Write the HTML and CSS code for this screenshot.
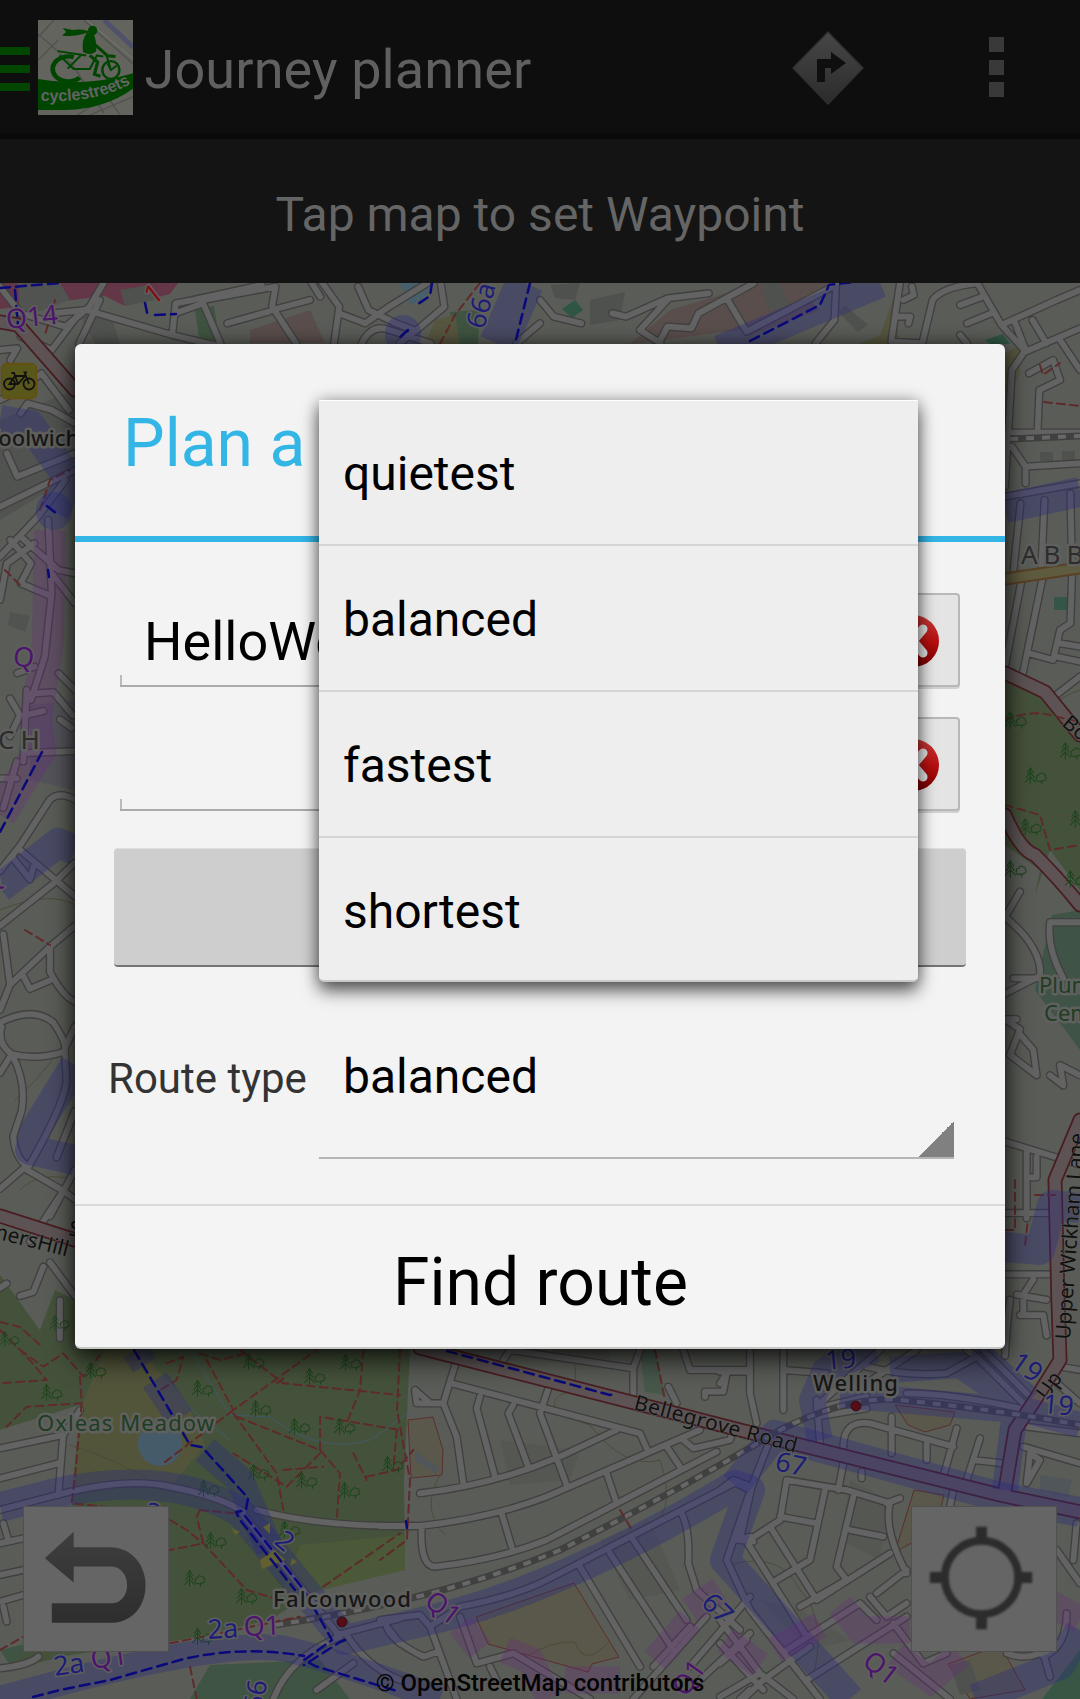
FILE: index.html
```html
<!DOCTYPE html>
<html lang="en">
<head>
<meta charset="utf-8">
<title>Journey planner</title>
<link rel="stylesheet" href="styles.css">
</head>
<body>
<div class="screen">
  <header class="action-bar">
    <div class="drawer-icon"><i></i><i></i><i></i></div>
    <svg class="logo" viewBox="105 58 266 287" preserveAspectRatio="none">
      <rect x="105" y="58" width="266" height="287" fill="#64645f"/>
      <g fill="none" stroke="#51514e" stroke-width="4">
        <path d="M105 100L200 190L290 340M150 58L105 110M105 180L160 120M215 345L371 240M250 345L371 290M235 60L371 190M300 290L335 345"/>
      </g>
      <path d="M290 58L371 140" stroke="#50526c" stroke-width="14"/>
      <path d="M240 58L371 175" stroke="#74746f" stroke-width="3"/>
      <path d="M105 236Q240 262 371 219V266Q290 328 185 330H105Z" fill="#004600"/>
      <g fill="none" stroke="#004600">
        <path d="M222 232A44 38 0 1 1 205 170" stroke-width="13"/>
        <ellipse cx="309" cy="209" rx="24" ry="27" stroke-width="7"/>
        <path d="M160 152L240 165M165 165L205 206H250L270 165L288 168M188 205L225 165M309 209L297 165M300 190L309 209L325 196" stroke-width="6"/>
        <path d="M250 165L272 185L263 222L280 228M262 130L300 166L322 168" stroke-width="9"/>
      </g>
      <ellipse cx="258" cy="90" rx="13" ry="15" fill="#004600"/>
      <path d="M243 96Q226 115 231 155Q250 168 268 153Q270 120 260 98ZM246 91Q222 84 201 88L174 82L184 94L172 105Q202 111 246 96Z" fill="#004600"/>
      <path id="logo-curve" d="M112 302Q265 312 372 247" fill="none"/>
      <text class="logo-text"><textPath href="#logo-curve" textLength="262" lengthAdjust="spacingAndGlyphs">cyclestreets</textPath></text>
    </svg>
    <h1>Journey planner</h1>
    <svg class="turn-icon" viewBox="0 0 74 76">
      <defs><linearGradient id="sign" x2="0" y2="1"><stop stop-color="#474747"/><stop offset="1" stop-color="#2b2b2b"/></linearGradient></defs>
      <path d="M37 2L72 38L37 74L2 38Z" fill="url(#sign)" stroke="#303030" stroke-width="1.5" stroke-linejoin="round"/>
      <path d="M26 52V29H40V22L55 33L40 44V38H34V52Z" fill="#0f0f0f"/>
    </svg>
    <div class="overflow-icon"><i></i><i></i><i></i></div>
  </header>
  <div class="hint">Tap map to set Waypoint</div>

  <main class="map">
    <svg class="map-canvas" viewBox="0 283 1080 1416">
      <defs>
        <symbol id="tree" viewBox="0 0 66 56" overflow="visible">
          <path d="M16 0V52M16 2L6 18M16 2L26 18M16 15L3 32M16 15L29 32M16 29L0 46M16 29L32 46M50 52V40M50 45L58 38M38 42Q30 40 35 32Q32 24 41 24Q44 14 53 20Q63 20 61 29Q68 36 58 40Q48 44 38 42Z"/>
        </symbol>
        <g id="minor">
          <!-- north-west -->
          <g transform="translate(0 280) scale(.3444 .3333)">
            <path d="M0 20L60 100L190 140L260 80L300 10M150 100L250 90L500 165L640 200M230 190L290 60M230 100L150 210L60 170M500 165L510 70L560 60L760 15M510 100L590 70L640 190M590 60L800 20L790 80L860 190M660 130L780 95M790 90L900 60M930 0L985 80L970 190M985 100L1060 130L1130 80L1240 10M1040 20L1070 90L1150 130L1200 150M1280 10L1290 80L1210 150L1160 190M1050 190Q1080 130 1130 150L1250 190M900 0L930 50M1500 190L1568 130M0 210L50 205L30 240M0 360L40 340L120 280L200 390M60 400L80 370L150 390L218 430M20 520L50 590L218 520M0 680L218 570M0 830L110 710L190 600M60 770L170 870L218 880M60 910L140 945L60 910L90 850L30 780M0 960L20 850L100 790M140 720L150 940L130 1130L90 1260M150 880L218 970M170 1180L218 1230M50 1180L100 1160"/>
          </g>
          <!-- north-east -->
          <g transform="translate(540 280) scale(.3444 .3333)">
            <path d="M0 60L40 110L120 130M210 100L250 110L370 55L490 40M370 60L290 150L350 190M350 180L370 140L440 145L460 100L620 10M545 60L600 155L850 20M860 10L855 120L800 190M1045 10L1020 185L1110 190M1080 20L1085 45L1055 60M1040 110L1075 110L1070 130M1110 190L1140 60Q1170 20 1270 10L1340 135L1410 215L1568 145M1340 135L1500 60L1568 30M1220 75L1285 50M1240 130L1310 100M1220 165L1240 190M1380 130L1410 210L1370 270L1350 620M1420 280L1490 240L1510 300L1450 330L1445 450M1430 120L1470 190M1510 180L1568 270M1368 458H1568M1370 500L1410 560L1568 550M1410 560V610M1350 650L1568 610M1395 670L1375 870M1465 660L1455 880M1540 640L1545 870M1350 1160L1400 890M1460 890L1400 1190M1545 880L1540 1030L1510 1050L1490 1140L1420 1120M1510 1090L1568 1100M1500 1130L1568 1145M1568 1190L1480 1260"/>
          </g>
          <!-- west strip -->
          <g transform="translate(0 690) scale(.3333 .4209)">
            <path d="M80 0L70 170M80 10L160 5L218 60M180 70L215 90M75 60L130 50M30 20L60 60L30 110M70 150L225 145M50 170L10 280M0 210H50M225 260Q180 240 150 260L60 370L0 430M60 380L225 490M40 400L90 450L100 420M0 560L160 460L225 410M30 700L150 610L225 560M10 580L30 700L0 760M150 610V670Q190 730 225 740M70 680L90 710L150 690M0 790Q100 750 160 790Q210 850 190 860Q110 880 35 865Q-10 840 5 800M0 910L35 865Q80 930 65 1000L40 1060Q45 1110 80 1130L0 1185M195 860L200 930Q190 990 80 1140L190 1190L225 1210M225 800L195 850M225 1000L170 1110M190 1190L90 1310M225 1140L150 1250M60 1440L100 1430L130 1370M150 1360L225 1440M180 1450V1540M0 1420L20 1410"/>
          </g>
          <!-- east strip -->
          <g transform="translate(900 560) scale(.3333 .5102)">
            <path d="M315 700L360 650M315 700Q430 760 420 820H340M420 815L315 850M450 710Q440 760 490 820M450 710H540M315 900L360 920L330 970L410 1010L400 960L360 930M320 900L350 900M450 1010L490 1030L480 990L540 1010M315 1140L540 1185M380 1160V1290M410 1170V1210L380 1210M320 1280H450M315 1400H470M350 1440L440 1450M315 1560Q320 1500 330 1450M360 1480H430L440 1520M400 1410L370 1440V1480"/>
          </g>
          <!-- south-west -->
          <g transform="translate(0 1330) scale(.33333)">
            <path d="M0 355L190 315L240 240M190 310L175 495M0 445L175 400M0 540L170 495Q380 440 510 470Q660 500 730 545M0 640L70 625M10 580L25 630M0 735L70 720M0 815L70 795M10 830L20 875M0 1015Q90 1005 115 980M730 555L1020 920Q870 980 820 1107M1010 915L1200 865M1040 915Q1100 1010 1200 1050M950 1080L1060 1000M770 540Q950 590 1240 588M1160 890L1200 940M1390 860"/>
          </g>
          <!-- south -->
          <g transform="translate(380 1330) scale(.33333)">
            <path d="M0 588H120Q330 565 500 500L960 300M120 490Q340 465 540 380L710 300M215 160L780 310L800 355M230 90L190 220L230 320L250 460M190 220H110L105 180L145 215M300 200L290 235L345 440M400 225L385 250L445 410M510 160L480 250L560 465M125 590Q120 710 165 710Q350 690 500 630L1010 365M365 550L395 650M680 430L710 520M860 350L900 410M910 330L940 355L1050 330L1060 300M370 90L390 60L760 115L780 60M760 115V190M910 60L930 120H1110M1040 130L1030 185H975V200M865 170L890 220M0 870L120 855L150 890L240 830Q400 800 500 750L1070 455L1110 470M20 890Q30 930 130 980L175 965M150 890L230 1107M240 860L290 1000L400 970L630 1107M905 550Q930 600 925 700L950 780L1080 900M600 710L780 1010M690 670L880 960M760 630L920 870M980 860L760 1107M1110 910L960 1050M1080 1107L1110 1080M820 1010L930 890M330 1010L350 1050M1110 800L930 1010M1110 620L1070 630M1070 460L1110 480"/>
          </g>
          <!-- south-east -->
          <g transform="translate(720 1330) scale(.33333)">
            <path d="M90 60V190L110 280M0 125H90M190 60V240M190 120L320 130M0 160L20 130M290 210L300 340M290 235L440 200M370 350Q370 270 450 280L700 350M515 260V370M710 295L670 440M620 340V390M780 325L740 450M760 390L850 400M290 260L440 235M200 450L380 480L510 520Q490 600 560 730M200 450L180 570L80 635L260 920M315 480L270 690L170 750M400 500L350 710L380 750M180 560L290 580M390 600L490 620M150 590L290 810L510 670M500 520L540 505M370 400L355 480M425 425V445M560 720L470 790M380 750L240 830M450 800L500 860L560 820M200 960L420 820L470 870M260 1050L560 860M270 950L130 1050L70 1107M0 1100L120 1030L220 1107M0 870L120 1030M90 840L300 1107M0 1000L80 930M520 880L610 1000L680 970M520 970L690 1107M970 970L990 1040M860 970Q910 990 960 970M1010 660L1080 760M1040 850Q1040 950 970 980M1070 580L1060 690M910 350L1080 400M920 460L960 390L930 370Z M560 190Q700 190 920 240M480 60L400 130L300 220M440 110Q560 140 680 130L770 80L930 240M590 60L440 160M790 60L930 200M920 290L1080 310M1020 110L1080 120M1000 150L1080 220M700 480L690 530M0 480L40 450L95 470L20 690L90 840M150 330L95 470L60 630L100 635M770 80L740 60M130 1080L0 940"/>
          </g>
        </g>
        <g id="major">
          <path d="M0 322L18 325L75 390"/>
          <path d="M1005 673L1045 692L1080 735M1005 815Q1020 850 1035 855Q1060 880 1080 905"/>
          <path d="M1080 1120L1055 1180L1058 1300L1060 1360L1035 1400L1015 1430L1005 1490"/>
          <path d="M420 1348L740 1430L1000 1495L1080 1512"/>
          <path d="M0 1216L75 1240"/>
        </g>
        <linearGradient id="back" x2="0" y2="1"><stop stop-color="#3e3e3e"/><stop offset="1" stop-color="#2e2e2e"/></linearGradient>
      </defs>

      <rect y="283" width="1080" height="1416" fill="#5a5d57"/>
      <!-- land use -->
      <path d="M0 283H178L170 294L125 306L105 296L0 309Z" fill="#633648"/>
      <path d="M195 310L214 306L220 344H200ZM450 312L480 310L478 344H455Z" fill="#3f5440"/>
      <path d="M250 330L310 310L325 343H250ZM630 344L670 310L760 283H830L740 330ZM720 300L790 283L820 310L750 335Z" fill="#5a4e4c"/>
      <path d="M400 283H432L425 298L410 305Z" fill="#475e6b"/>
      <path d="M435 320L455 315L460 344H425ZM893 300L880 335L860 344H900ZM1005 354L1020 344V374L1005 400Z" fill="#56563f"/>
      <path d="M562 309L575 300L583 310L572 318ZM985 340L1003 334L1010 344H990Z" fill="#2f5544"/>
      <path d="M0 420L75 390V460L50 490L0 520ZM10 612L30 616L25 632L8 625ZM18 283H60L70 300L20 318ZM80 315L110 312L120 344H95Z" fill="#515350"/>
      <path d="M30 705L75 700V790L30 780Z" fill="#54535a"/>
      <rect x="1054" y="597" width="13" height="13" fill="#345547"/>
      <path d="M1005 675L1040 695L1080 740V890L1050 850L1035 895L1040 870L1005 845Z" fill="#45523b"/>
      <path d="M1052 915L1080 910V1050L1035 990Z" fill="#3f5447"/>
      <path d="M0 1275L40 1330L55 1290L75 1300V1349H410L404 1480L405 1570L325 1585L270 1620L180 1640L70 1655L0 1672V1630H56V1507H72L80 1405L0 1430Z" fill="#45523b"/>
      <path d="M82 1405L105 1349L140 1349L185 1400L205 1445L172 1485L70 1492Z" fill="#525539"/>
      <path d="M0 1430L80 1405L72 1490L56 1507V1635L0 1670Z" fill="#5a5d57"/>
      <path d="M300 1545L405 1535V1570L330 1588L280 1600Z" fill="#4b5938"/>
      <path d="M0 1650L50 1638L10 1665ZM210 1665L320 1660L350 1699H190Z" fill="#405443"/>
      <circle cx="160" cy="1444" r="22" fill="#455b69"/>
      <path d="M408 1420L433 1417L443 1450L442 1475L411 1478ZM476 1617L574 1583L619 1657L592 1664L588 1672L488 1644ZM895 1405L955 1412L950 1425L925 1432L908 1425ZM914 1490L944 1495L935 1530L895 1552ZM948 1664L1000 1645L1025 1690L970 1699Z" fill="#5a584a" stroke="#5c2e2e"/>
      <path d="M416 1452L440 1468L436 1474L414 1460ZM1040 1475L1072 1480L1068 1497L1040 1490Z" fill="#505659"/>
      <path d="M640 1350H655L665 1395L645 1392Z" fill="#47584b"/>
      <path d="M1042 1699L1080 1650V1699Z" fill="#375744"/>
      <g fill="#4f514e">
        <path d="M550 285L580 283L575 300L555 298ZM590 300L625 292L620 320L590 325ZM760 283L780 283L790 305L770 312ZM845 305L868 325L858 332L838 312ZM120 290L150 285L155 300L125 306ZM1040 452H1053V461H1040ZM1062 451H1075V460H1062ZM950 1665L970 1660L980 1690L960 1695Z"/>
        <path d="M550 1349H610V1365L560 1360ZM500 1440L580 1450L570 1480L510 1485ZM600 1540L650 1520L680 1590L630 1600ZM760 1600L800 1610L850 1640L810 1650ZM850 1480L890 1500L880 1560L840 1540Z" opacity=".45"/>
      </g>
      <!-- contours and streams -->
      <g fill="none" stroke="#4b4c38">
        <path d="M570 1349Q585 1390 560 1395Q540 1410 590 1425Q625 1470 660 1460Q680 1520 640 1530M440 1475Q420 1510 445 1535M730 1565Q780 1550 800 1590Q830 1620 810 1690M15 1100Q60 1060 75 1020M0 910Q50 890 75 905M20 1190Q40 1170 75 1180M1010 740Q1050 700 1080 690M1040 820Q1060 810 1080 820M70 1445Q120 1460 165 1490M250 1430Q290 1440 300 1480M522 1660Q550 1640 575 1642Q585 1670 610 1640"/>
        <path d="M190 1350L230 1415L270 1417Q320 1455 370 1440Q400 1420 410 1410M180 1400L230 1440" stroke="#41596a"/>
      </g>

      <!-- roads -->
      <g class="roads">
        <use href="#minor" class="minor-case"/>
        <use href="#minor" class="minor-fill"/>
        <use href="#major" class="major-case"/>
        <use href="#major" class="major-fill"/>
        <path d="M1005 579L1080 568" stroke="#594023" stroke-width="13"/>
        <path d="M1005 579L1080 568" stroke="#5f5b40" stroke-width="9"/>
      </g>

      <!-- railway -->
      <g fill="none">
        <path d="M275 1625Q440 1600 560 1550Q680 1490 780 1430Q850 1395 900 1400Q1000 1410 1080 1425M1010 439L1080 436" stroke="#404040" stroke-width="7"/>
        <path d="M275 1625Q440 1600 560 1550Q680 1490 780 1430Q850 1395 900 1400Q1000 1410 1080 1425M1010 439L1080 436" stroke="#676767" stroke-width="4" stroke-dasharray="8 8"/>
      </g>

      <!-- woodland footpaths -->
      <g class="footpath">
        <g transform="translate(0 1330) scale(.33333)">
          <path d="M0 0L80 80L140 150L0 160M60 60L130 110L190 70L250 140L300 75M240 140L245 220L80 230L20 290M245 220L225 440L215 520L320 530M600 70L660 90L740 70M620 90L700 240L950 60M720 60L850 160L1200 195M850 145L830 160M1090 60L1080 180L1040 280M700 240L490 400M700 250L830 430L850 540M710 260L960 360L1020 430L1010 570M960 360V260L1200 300M960 370L860 470L700 370M500 100L550 80L530 150L480 180M850 420L970 410M1100 440L1190 420L1240 360M1060 370L1100 450M1190 300L1180 420M510 570L560 600L610 640L740 780L840 810M600 540L590 560L610 640L510 660M510 940L900 860M600 540L700 550M970 770L1200 610M0 960L70 920M570 1010L590 1107"/>
        </g>
        <path d="M400 1350L397 1410L410 1480L407 1540L380 1560M655 1350L665 1400M620 1510L632 1530M5 570L20 585M55 300L45 335M40 510L50 480L70 470M25 930L50 945M0 1322L20 1327L40 1345M1005 805L1040 815L1050 850L1080 845M1005 720Q1030 710 1050 715L1080 722M1015 1180V1230H1005M1035 1195H1055M1025 1245L1028 1220M1040 365L1043 375L1060 363M1044 402L1080 406M440 344L455 315L480 283"/>
      </g>
      <g fill="none" stroke="#1e451e" stroke-width="3.200">
        <use href="#tree" x="0" y="1331" width="20" height="17"/><use href="#tree" x="85" y="1362" width="22" height="18"/><use href="#tree" x="41" y="1384" width="22" height="18"/><use href="#tree" x="192" y="1380" width="22" height="18"/><use href="#tree" x="243" y="1353" width="22" height="18"/><use href="#tree" x="304" y="1368" width="22" height="18"/><use href="#tree" x="340" y="1354" width="22" height="18"/><use href="#tree" x="250" y="1400" width="22" height="18"/><use href="#tree" x="289" y="1418" width="22" height="18"/><use href="#tree" x="334" y="1418" width="22" height="18"/><use href="#tree" x="248" y="1464" width="22" height="18"/><use href="#tree" x="296" y="1472" width="22" height="18"/><use href="#tree" x="339" y="1482" width="22" height="18"/><use href="#tree" x="382" y="1456" width="22" height="18"/><use href="#tree" x="198" y="1480" width="22" height="18"/><use href="#tree" x="205" y="1532" width="22" height="18"/><use href="#tree" x="184" y="1570" width="22" height="18"/><use href="#tree" x="236" y="1588" width="22" height="18"/><use href="#tree" x="192" y="1628" width="22" height="18"/><use href="#tree" x="279" y="1521" width="22" height="18"/><use href="#tree" x="50" y="1315" width="20" height="17"/><use href="#tree" x="1005" y="711" width="22" height="19"/><use href="#tree" x="1060" y="742" width="22" height="19"/><use href="#tree" x="1025" y="767" width="22" height="19"/><use href="#tree" x="1020" y="818" width="22" height="19"/><use href="#tree" x="1070" y="810" width="22" height="19"/><use href="#tree" x="1005" y="860" width="22" height="19"/><use href="#tree" x="1065" y="870" width="22" height="19"/>
      </g>

      <!-- cycle network -->
      <g fill="none" stroke="#282880" stroke-opacity=".34" stroke-width="30" stroke-linejoin="round">
        <path d="M525 283L498 344" stroke-width="38"/>
        <path d="M720 350L880 283M1005 508L1080 492M0 420L30 425L70 480L54 512M0 888L58 843L75 850M75 1065L35 1130L30 1150L75 1160"/>
        <path d="M403 333V335M54 510V512" stroke-width="36" stroke-linecap="round"/>
        <path d="M0 1507L60 1492Q170 1470 240 1512L345 1640L430 1620"/>
        <path d="M135 1350L145 1365M155 1380L180 1418M205 1450L240 1480L270 1550" stroke-width="28"/>
        <path d="M0 1699Q230 1635 290 1650Q350 1665 440 1699" stroke-width="26"/>
        <path d="M430 1620Q560 1590 735 1485L750 1490L725 1560L850 1699"/>
        <path d="M735 1485L775 1435L1000 1497L1080 1512"/>
        <path d="M820 1440L812 1400L825 1370L875 1350M840 1395L1015 1410L1005 1490M890 1370L960 1365L1025 1410M1025 1410L1080 1425M975 1350L1030 1400" stroke-width="26"/>
        <path d="M1005 1247L1040 1250L1052 1205L1080 1208M975 1699L1060 1665L1080 1630"/>
      </g>
      <g fill="none" stroke="#682881" stroke-opacity=".28" stroke-width="32">
        <path d="M50 530L48 640L36 720L40 750L0 815"/>
        <path d="M460 1625L480 1650M505 1650L530 1660L550 1699M565 1680H620M655 1660L690 1620M690 1610L720 1590M725 1640L760 1665M775 1650L820 1625M840 1605L860 1630L910 1630M895 1655L930 1680L960 1655M1045 1600L1080 1620" stroke-width="27"/>
      </g>
      <g fill="#62602e"><path d="M260 1560L275 1550L285 1560L262 1569ZM263 1527L270 1523L270 1534ZM292 1558L297 1562L290 1566ZM232 1528L240 1532L235 1535Z"/></g>
      <g class="cycle">
        <path d="M134 1350L190 1445L202 1447L248 1498L246 1510L236 1512L240 1520L295 1590"/>
        <path d="M245 1516L304 1590L332 1640L304 1660L315 1666L400 1692"/>
        <path d="M33 1697L60 1690L110 1680L180 1660Q240 1645 304 1656"/>
        <path d="M447 1351L610 1395L615 1394M345 1640L340 1642L304 1665M406 1521L407 1528"/>
        <path d="M432 283L430 296L418 304M408 330L397 340M530 283L515 344M750 341L820 305L829 285L870 280M145 303L148 317M155 315L176 314M0 288L60 283M47 506L57 514M48 570L49 577M42 752L30 775L0 832M15 290L18 325"/>
      </g>

      <!-- street furniture and stations -->
      <g>
        <rect x="1.5" y="363.500" width="35" height="35" rx="5" fill="#5a571b" stroke="#664e0c" stroke-width="1.500"/>
        <g fill="none" stroke="#111" stroke-width="1.800"><circle cx="9.500" cy="384" r="5.500"/><circle cx="29" cy="384" r="5.500"/><path d="M9.500 384L15 376H25L18 384ZM18 384L14 373H11.500M29 384L24.500 372.500H27"/></g>
        <circle cx="342" cy="1622" r="5" fill="#560d15" stroke="#321014"/>
        <circle cx="856" cy="1406" r="5" fill="#560d15" stroke="#321014"/>
      </g>

      <g class="label">
        <text x="-22" y="446" class="place">Woolwich</text>
        <text x="1021" y="564" class="suburb">ABBEY</text>
        <text x="-2" y="749" class="suburb">CH</text>
        <text x="37" y="1431" class="green" textLength="177">Oxleas Meadow</text>
        <text x="1039" y="993" class="green">Plumstead</text>
        <text x="1044" y="1021" class="green">Cemetery</text>
        <text x="273" y="1607" class="place" textLength="138">Falconwood</text>
        <text x="813" y="1391" class="place" textLength="85">Welling</text>
        <text transform="translate(633 1409) rotate(15)" class="street" textLength="168">Bellegrove Road</text>
        <text transform="translate(-43 1229) rotate(14)" class="street">PlumersHill</text>
        <text transform="translate(68 1235) rotate(10)" class="street">Sh</text>
        <text transform="translate(1070 1340) rotate(-86)" class="street" textLength="207">Upper Wickham Lane</text>
        <text transform="translate(1061 725) rotate(40)" class="street">Bostall</text>
        <text transform="translate(1047 1401) rotate(-55)" class="street">Up</text>
      </g>
      <g class="label route">
        <text transform="translate(7 329) rotate(-6)" class="violet">Q14</text>
        <text transform="translate(153 306) rotate(-38)" class="red">1</text>
        <text transform="translate(484 330) rotate(-75)">66a</text>
        <text transform="translate(12 665) rotate(8)" class="violet">Q</text>
        <text transform="translate(-12 895) rotate(-40)" class="violet">Q</text>
        <text transform="translate(826 1370) rotate(-5)">19</text>
        <text transform="translate(1009 1366) rotate(35)">19</text>
        <text transform="translate(1042 1413) rotate(5)">19</text>
        <text transform="translate(774 1470) rotate(12)">67</text>
        <text transform="translate(700 1604) rotate(45)">67</text>
        <text transform="translate(143 1520) rotate(15)">2</text>
        <text transform="translate(273 1543) rotate(40)">2</text>
        <text transform="translate(208 1639) rotate(-3)">2a</text>
        <text transform="translate(244 1636) rotate(-2)" class="violet">Q1</text>
        <text transform="translate(55 1676) rotate(-8)">2a</text>
        <text transform="translate(92 1669) rotate(-8)" class="violet">Q1</text>
        <text transform="translate(423 1604) rotate(38)" class="violet">Q1</text>
        <text transform="translate(861 1664) rotate(38)" class="violet">Q1</text>
        <text transform="translate(686 1698) rotate(-55)" class="violet">Q1</text>
        <text transform="translate(262 1712) rotate(-80)">66</text>
      </g>
    </svg>

    <div class="map-controls">
      <div class="map-button">
        <svg viewBox="0 0 145 145"><path d="M21 51.500L50 25V40.500H87C134 42 134 115 89 116.500H28V97H89C109 96 109 61 88 60H50V76Z" fill="url(#back)"/></svg>
      </div>
      <div class="attribution">© OpenStreetMap contributors</div>
      <div class="map-button">
        <svg class="locate" viewBox="0 0 145 145"><g fill="none" stroke="#2c2c2c"><circle cx="70" cy="71" r="37" stroke-width="8"/><path d="M70 20V34M70 109V123M18 71H31M108 71H121" stroke-width="11"/></g></svg>
      </div>
    </div>
  </main>

  <section class="dialog">
    <h2>Plan a</h2>
    <div class="form">
      <div class="row"><div class="field">HelloWo</div><button class="clear"><svg viewBox="0 0 52 52"><use href="#x-mark"/></svg></button></div>
      <div class="row"><div class="field"></div><button class="clear"><svg viewBox="0 0 52 52"><use href="#x-mark"/></svg></button></div>
      <div class="add-button"></div>
      <div class="route-type"><label>Route type</label><div class="spinner">balanced</div></div>
    </div>
    <div class="find">Find route</div>
    <ul class="options"><li>quietest</li><li>balanced</li><li>fastest</li><li>shortest</li></ul>
  </section>
  <svg class="defs" width="0" height="0">
    <defs>
      <linearGradient id="red" x2="0" y2="1"><stop stop-color="#c83c3c"/><stop offset=".5" stop-color="#b81010"/><stop offset="1" stop-color="#760000"/></linearGradient>
      <g id="x-mark"><circle cx="26" cy="26" r="26" fill="url(#red)"/><path d="M16 14L36 38M36 14L16 38" stroke="#e3e3e3" stroke-width="9" stroke-linecap="round"/></g>
    </defs>
  </svg>
</div>
</body>
</html>
```
FILE: styles.css
```css
* { box-sizing: border-box; }
body { margin: 0; background: #141414; font-family: Roboto, sans-serif; }
.screen { position: relative; display: flex; flex-direction: column; width: 1080px; height: 1699px; overflow: hidden; }
.defs { position: absolute; }

.action-bar { display: flex; align-items: center; height: 139px; flex: none; background: #0e0e0e; border-bottom: 6px solid #0a0a0a; }
.drawer-icon { display: flex; flex-direction: column; gap: 10px; width: 30px; padding-top: 5px; }
.drawer-icon i { height: 8px; background: #004600; }
.logo { width: 95px; height: 95px; margin: 1px 12px 0 7.5px; }
.logo-text { font: bold 50px "Liberation Sans", sans-serif; fill: #646464; }
.action-bar h1 { margin: 5px 0 0; flex: 1; font-size: 54px; font-weight: 400; letter-spacing: .12px; color: #606060; }
.turn-icon { width: 74px; height: 76px; margin-top: 2px; }
.overflow-icon { display: flex; flex-direction: column; gap: 7.5px; width: 15px; margin: 1px 76px 0 124px; }
.overflow-icon i { height: 15px; background: #393939; }
.hint { height: 144px; flex: none; padding-top: 4px; line-height: 144px; text-align: center; font-size: 48px; color: #656565; background: #141414; }

.map { position: relative; display: flex; flex: 1; }
.map-canvas { display: block; width: 1080px; height: 1416px; }
.roads, .footpath, .cycle { fill: none; stroke-linejoin: round; stroke-linecap: round; }
#minor path, #major path, .footpath path { vector-effect: non-scaling-stroke; }
.minor-case { stroke: #404040; stroke-width: 8.5px; }
.minor-fill { stroke: #636363; stroke-width: 5.800px; }
.major-case { stroke: #4a1d22; stroke-width: 15px; }
.major-fill { stroke: #5d5354; stroke-width: 11.500px; }
.footpath { stroke: #5f2a2a; stroke-width: 2px; stroke-dasharray: 8 5; }
.cycle { stroke: #09097b; stroke-width: 2.500px; stroke-dasharray: 10 6; }
.label { font: 22px "Noto Sans", sans-serif; fill: #171717; stroke: #5f605e; stroke-width: 5px; stroke-linejoin: round; paint-order: stroke; }
.place { font-weight: 500; }
.suburb { font-size: 26px; letter-spacing: 6px; fill: #2d2d2d; }
.green { fill: #203d24; }
.street { font-size: 21px; fill: #111; stroke-width: 1px; }
.route { font-size: 27px; fill: #1d1d77; stroke-width: 3px; }
.violet { fill: #4d146d; }
.red { fill: #850d14; }

.map-controls { position: absolute; left: 23px; right: 23px; bottom: 0; display: flex; justify-content: space-between; align-items: flex-end; }
.map-button { width: 146px; height: 146px; margin-bottom: 47px; background: #656565; border: 1px solid #505050; }
.map-button svg { display: block; width: 144px; height: 144px; }
.locate { filter: blur(1px); }
.attribution { font-size: 24px; line-height: 28px; margin-bottom: 2px; letter-spacing: -.05px; color: #050505; font-weight: 500; }

.dialog { position: absolute; left: 75px; top: 344px; width: 930px; height: 1005px; display: flex; flex-direction: column; background: #f3f3f3; border-radius: 6px; border-bottom: 2px solid #c5c7c5; box-shadow: 0 10px 28px rgba(0,0,0,.75), 0 0 14px rgba(0,0,0,.35); }
.dialog h2 { margin: 0; height: 198px; padding: 7px 48px 0; line-height: 185px; font-size: 66px; font-weight: 400; color: #33b5e5; border-bottom: 6px solid #33b5e5; }
.form { flex: 1; padding: 51px 34px 0; }
.row { display: flex; height: 94px; margin: 0 11px 30px; }
.field { position: relative; flex: 1; padding: 0 24px; font-size: 54px; line-height: 97px; color: #000; border-bottom: 2px solid #aaa; }
.field::before { content: ""; position: absolute; left: 0; bottom: 0; width: 2px; height: 10px; background: #bbb; }
.clear { display: flex; align-items: center; justify-content: center; width: 94px; padding: 1px 0 0; background: #e4e4e4; border: 2px solid #b8b8b8; border-radius: 4px; box-shadow: 0 2px 0 #d0d0d0; }
.clear svg { width: 52px; height: 52px; }
.add-button { height: 119px; margin: 37px 5px 0; background: #cecece; border-radius: 4px; border-top: 1px solid #dedede; border-bottom: 2px solid #747474; }
.route-type { display: flex; margin-top: 39px; height: 153px; }
.route-type label { width: 210px; padding-top: 46px; font-size: 42px; line-height: 53px; text-indent: -1px; color: #333; }
.spinner { width: 635px; padding: 43px 24px 0; font-size: 48px; line-height: 56px; color: #000; border-bottom: 2px solid #b5b5b5; background: linear-gradient(135deg, transparent 50%, #808080 50%) right bottom / 36px 36px no-repeat; }
.find { height: 143px; padding: 5px 0 0 1px; line-height: 143px; text-align: center; font-size: 66px; color: #000; background: #f4f4f4; border-top: 2px solid #dadada; border-radius: 0 0 6px 6px; }
.options { position: absolute; left: 244px; top: 56px; width: 599px; height: 582px; margin: 0; padding: 0; list-style: none; background: #eee; border-top: 1px solid #fff; border-bottom: 2px solid #c9c9c9; border-radius: 1px 1px 5px 5px; box-shadow: 0 9px 17px rgba(0,0,0,.6), 0 0 15px rgba(0,0,0,.28); }
.options li { height: 146px; padding: 2px 24px 0; font-size: 48px; line-height: 144px; color: #000; border-bottom: 2px solid #d5d5d5; }
.options li:first-child { height: 145px; padding-top: 1px; }
.options li:last-child { height: 141px; border: 0; }
```
